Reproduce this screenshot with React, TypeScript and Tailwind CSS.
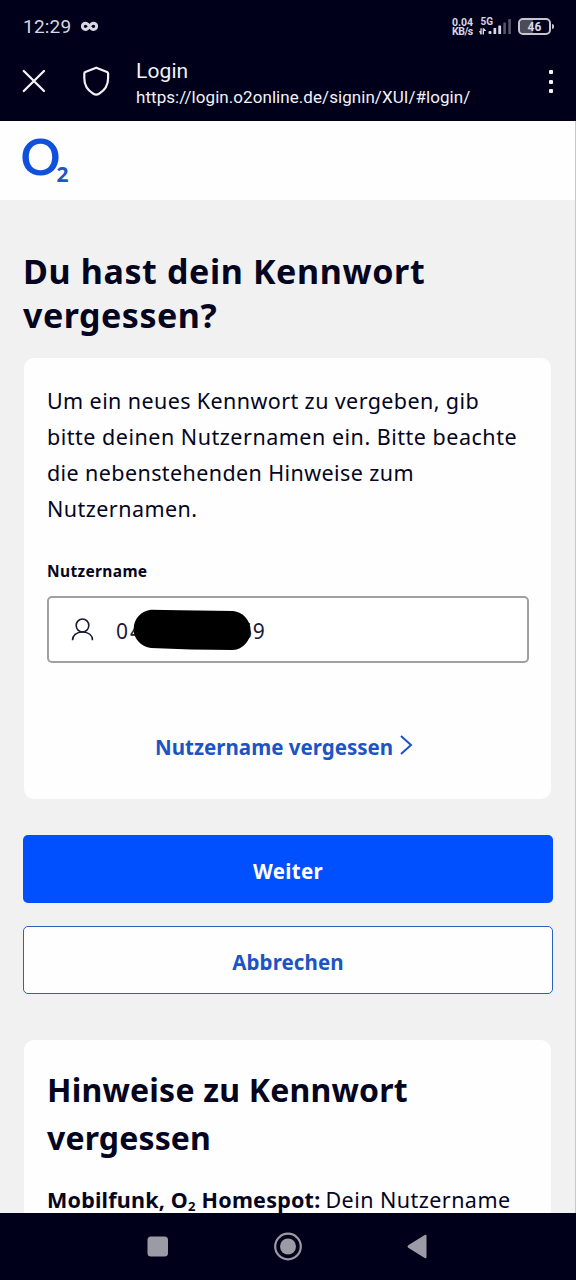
import { useState } from "react";
import type { ChangeEvent, ReactNode } from "react";

type LineProps = { className?: string; children: ReactNode };

const Line = ({ className = "", children }: LineProps) => (
  <span className={`block w-max whitespace-nowrap ${className}`}>{children}</span>
);

const StatusBar = () => (
  <div className="flex h-[52px] items-center justify-between pl-[23px] pr-[22px] pt-px text-[#d8d8e4]">
    <div className="flex items-center gap-[10px]">
      <span className="mt-px font-['Roboto',sans-serif] text-[19px] leading-[22px] tracking-[0.2px]">12:29</span>
      <svg width="17" height="11" viewBox="0 0 17 11" fill="none" stroke="currentColor" strokeWidth="2.9" className="-mt-px" aria-hidden="true">
        <path d="M8.5 5.3C7 3 5.8 2.2 4.5 2.2a3.1 3.1 0 0 0 0 6.3c1.5 0 2.7-1 4-3.2s2.5-3.1 4-3.1a3.1 3.1 0 0 1 0 6.3c-1.4 0-2.6-.9-4-3.2Z" />
      </svg>
    </div>
    <div className="flex items-center">
      <div className="mr-[5px] w-[22px] whitespace-nowrap font-['Roboto',sans-serif] text-[10.5px] font-bold leading-[9px]">
        <div className="h-[9px]">0.04</div>
        <div className="h-[9px] tracking-[-0.5px]">KB/s</div>
      </div>
      <svg width="34" height="20" viewBox="0 0 34 20" fill="currentColor" className="mr-[5px]" aria-hidden="true">
        <text x="1.5" y="8.3" fontSize="10" fontWeight="700" fontFamily="Roboto, sans-serif">5G</text>
        <path d="M0 14h1.4v-2.8h1.3v6.2H1.4Zm3.6-2.8H5v6.2H3.6Zm1.4 0 2.4 2.9H5Z" />
        <rect x="9.5" y="14" width="3" height="3" rx="1" />
        <rect x="14.5" y="11" width="2.7" height="6" rx=".6" />
        <rect x="19.3" y="8.5" width="2.8" height="8.5" rx=".6" />
        <rect x="24.3" y="5.5" width="2.6" height="11.5" rx=".6" opacity=".4" />
        <rect x="29.3" y="2" width="2.6" height="15" rx=".6" opacity=".4" />
      </svg>
      <div className="flex items-center">
        <div className="flex h-[17px] w-[33px] items-center justify-center rounded-[5px] border-2 border-[#c6c6d0] bg-linear-to-r from-[#4b4b59] from-46% to-transparent to-46% bg-clip-padding font-['Roboto',sans-serif] text-[12px] font-bold leading-none">
          46
        </div>
        <div className="ml-px h-[5px] w-[2px] rounded-r-sm bg-[#c6c6d0]" />
      </div>
    </div>
  </div>
);

const BrowserBar = () => (
  <div className="flex h-[69px] items-start pl-[22px] pr-[23px] text-[#f2f2f7]">
    <button type="button" aria-label="Schließen" className="mt-[17px]">
      <svg width="24" height="24" viewBox="0 0 24 24" fill="none" stroke="currentColor" strokeWidth="2.3" strokeLinecap="round">
        <path d="M1.8 2 22 22M22 2 1.8 22" />
      </svg>
    </button>
    <svg width="28" height="30" viewBox="0 0 28 30" fill="none" stroke="currentColor" strokeWidth="2.2" strokeLinejoin="round" className="ml-[36px] mt-[14px]" aria-hidden="true">
      <path d="M14.2 1.7 25.1 6.1q1 .5 1 1.7v4.5c0 7.5-3.6 12.2-9 15.4-1.9 1.1-3.9 1.1-5.8 0-5.4-3.2-9-7.9-9-15.4V7.8q0-1.2 1-1.7Z" />
    </svg>
    <div className="ml-[26px] mt-[6px] flex-1 font-['Roboto',sans-serif]">
      <div className="text-[21px] leading-[26px] tracking-[0.1px]">Login</div>
      <div className="text-[17px] leading-[26px] tracking-[0.06px]">https://login.o2online.de/signin/XUI/#login/</div>
    </div>
    <button type="button" aria-label="Menü" className="mt-[18px] flex flex-col gap-[5.5px]">
      <span className="size-[4px] rounded-[1px] bg-current" />
      <span className="size-[4px] rounded-[1px] bg-current" />
      <span className="size-[4px] rounded-[1px] bg-current" />
    </button>
  </div>
);

const Logo = () => (
  <svg width="50" height="50" viewBox="0 0 50 50" aria-label="O2">
    <path
      fill="#0f51dc"
      fillRule="evenodd"
      d="M19.5 1.4C30.2 1.4 37.6 9 37.6 20S30.2 38.6 19.5 38.6 1.4 31 1.4 20 8.8 1.4 19.5 1.4Zm0 5.3C12.4 6.7 7.8 12 7.8 20s4.6 13.3 11.7 13.3S31.2 28 31.2 20 26.6 6.7 19.5 6.7Z"
    />
    <text x="35.5" y="45" fill="#1f55c4" fontSize="21" fontWeight="700" fontFamily="Noto Sans, sans-serif">2</text>
  </svg>
);

const UsernameField = () => {
  const [value, setValue] = useState("04");

  const handleChange = (e: ChangeEvent<HTMLInputElement>) => setValue(e.target.value);

  return (
    <div className="mt-[13px] flex h-[67px] w-[482px] items-center rounded-[5px] border-2 border-[#a0a0a0] bg-white pl-[22px]">
      <svg width="24" height="24" viewBox="0 0 24 24" fill="none" stroke="#1a1a38" strokeWidth="1.6" aria-hidden="true">
        <ellipse cx="11.5" cy="7.5" rx="6.3" ry="6.5" />
        <path d="M1.5 22.3c0-4.9 3.7-8.3 10-8.3s10 3.4 10 8.3" />
      </svg>
      <div className="relative ml-[21px] flex h-[34px] font-['Noto_Sans',sans-serif] text-[21px] leading-[30px] text-[#1a1a38]">
        <input
          aria-label="Nutzername"
          value={value}
          onChange={handleChange}
          className="mt-[3px] h-[30px] w-[124px] bg-transparent tracking-[2px] outline-none"
        />
        <span className="mt-[3px] tracking-[0.8px]">69</span>
        <svg width="122" height="42" viewBox="0 0 122 42" className="absolute left-[15px] top-[-4px]" aria-hidden="true">
          <path d="M20 .7 48 1.3l54 .8a19.6 19.6 0 0 1 0 39L60 40.4l-40-1.3A19.3 19.3 0 0 1 20 .7Z" />
        </svg>
      </div>
    </div>
  );
};

const NavigationBar = () => (
  <nav className="flex h-[67px] shrink-0 bg-[#00001a] pl-[147px]">
    <svg width="282" height="67" viewBox="0 0 282 67" fill="#9b9ba5" aria-hidden="true">
      <rect x="0.5" y="23.5" width="20.5" height="20" rx="3.5" />
      <circle cx="141" cy="33.5" r="12.8" fill="none" stroke="#9b9ba5" strokeWidth="2.2" />
      <circle cx="141" cy="33.5" r="8" />
      <path d="M261.2 32.2 277.7 22q1.8-.9 1.8 1v21q0 1.9-1.8 1l-16.5-10.3q-1.5-1.2 0-2.5Z" />
    </svg>
  </nav>
);

export default function App() {
  return (
    <div className="flex h-[1280px] w-[576px] flex-col overflow-hidden bg-[#f1f1f2] font-['Noto_Sans',sans-serif] text-[#05051f]">
      <header className="h-[121px] shrink-0 bg-[#00001a]">
        <StatusBar />
        <BrowserBar />
      </header>

      <main className="min-h-0 flex-1 overflow-hidden border-r border-[#c8c8cc]">
        <div className="h-[79px] bg-[#fefefe] pl-[21px] pt-[16px]">
          <Logo />
        </div>

        <h1 className="ml-[23px] mt-[49px] text-[34px] font-bold leading-[44px]">
          <Line className="tracking-[0.62px]">Du hast dein Kennwort</Line>
          <Line className="tracking-[0.5px]">vergessen?</Line>
        </h1>

        <section className="ml-[24px] mt-[21px] h-[441px] w-[527px] rounded-[10px] bg-[#fefefe] pl-[23px] pt-[25px]">
          <p className="text-[21.5px] leading-[36px]">
            <Line className="tracking-[0.4px]">Um ein neues Kennwort zu vergeben, gib</Line>
            <Line className="tracking-[0.51px]">bitte deinen Nutzernamen ein. Bitte beachte</Line>
            <Line className="tracking-[0.4px]">die nebenstehenden Hinweise zum</Line>
            <Line className="tracking-[0.45px]">Nutzernamen.</Line>
          </p>
          <label className="mt-[32px] block text-[15.5px] font-bold leading-[24px]">
            <Line className="tracking-[0.35px]">Nutzername</Line>
          </label>
          <UsernameField />
          <a href="#" className="ml-[108px] mt-[68px] flex items-center text-[20.5px] font-bold leading-[32px] text-[#1c54c6]">
            <Line className="w-[239px] tracking-[0.02px]">Nutzername vergessen</Line>
            <svg width="14" height="22" viewBox="0 0 14 22" fill="none" stroke="currentColor" strokeWidth="2" className="ml-[6px] -mt-[5px]" aria-hidden="true">
              <path d="m2 2 10 9L2 20" />
            </svg>
          </a>
        </section>

        <div className="ml-[23px] mt-[36px] flex w-[530px] flex-col gap-[23px] text-[20.5px] font-bold">
          <button type="button" className="flex h-[68px] items-center justify-center rounded-[5px] bg-[#0050ff] pt-[5px] text-white">
            <Line className="tracking-[0.3px]">Weiter</Line>
          </button>
          <button type="button" className="flex h-[68px] items-center justify-center rounded-[5px] border-[1.5px] border-[#2b61bd] bg-[#fefefe] pt-[5px] text-[#1c54c6]">
            <Line className="tracking-[0.1px]">Abbrechen</Line>
          </button>
        </div>

        <section className="ml-[24px] mt-[46px] h-[300px] w-[527px] rounded-[10px] bg-[#fefefe] pl-[23px] pt-[26px]">
          <h2 className="text-[32px] font-bold leading-[48px]">
            <Line className="tracking-[0.2px]">Hinweise zu Kennwort</Line>
            <Line className="tracking-[0.15px]">vergessen</Line>
          </h2>
          <p className="mt-[20px] flex text-[21.5px] leading-[36px]">
            <Line className="w-[274px] font-bold tracking-[0.22px]">
              Mobilfunk, O<span className="relative top-[3px] text-[13px] leading-none">2</span> Homespot:
            </Line>
            <Line className="ml-[5px] tracking-[0.45px]">Dein Nutzername</Line>
          </p>
        </section>
      </main>

      <NavigationBar />
    </div>
  );
}
